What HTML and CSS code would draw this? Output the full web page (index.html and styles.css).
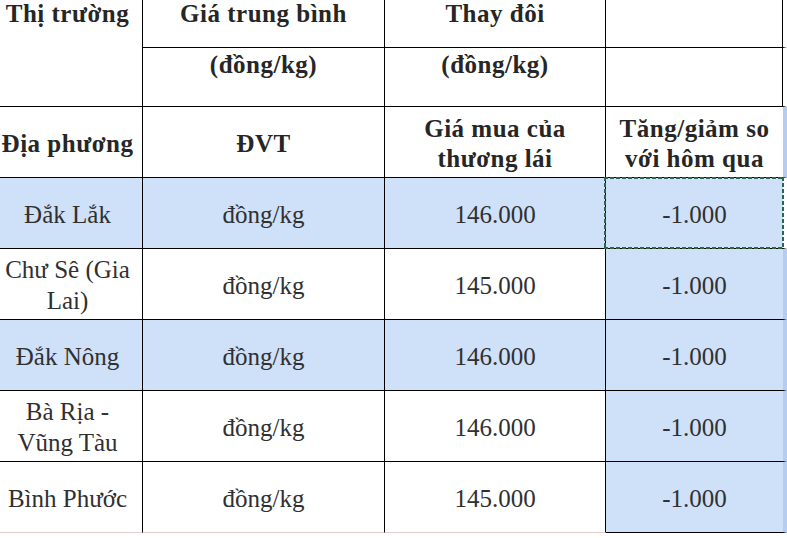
FILE: index.html
```html
<!DOCTYPE html>
<html lang="vi">
<head>
<meta charset="utf-8">
<title>Giá cà phê</title>
<link rel="stylesheet" href="styles.css">
</head>
<body>
<table class="price-table">
  <colgroup>
    <col class="c1">
    <col class="c2">
    <col class="c3">
    <col class="c4">
  </colgroup>
  <tbody>
    <tr class="r-top">
      <th class="col-first top" rowspan="2">Thị trường</th>
      <th class="top">Giá trung bình</th>
      <th class="top">Thay đôi</th>
      <th class="top last-head"></th>
    </tr>
    <tr class="r-unit">
      <th class="top unit">(đồng/kg)</th>
      <th class="top unit">(đồng/kg)</th>
      <th class="top last-head"></th>
    </tr>
    <tr class="r-head">
      <th class="col-first">Địa phương</th>
      <th>ĐVT</th>
      <th>Giá mua của thương lái</th>
      <th class="last strip">Tăng/giảm so với hôm qua</th>
    </tr>
    <tr class="row shaded">
      <td class="col-first">Đắk Lắk</td>
      <td>đồng/kg</td>
      <td>146.000</td>
      <td class="last selected">-1.000</td>
    </tr>
    <tr class="row">
      <td class="col-first">Chư Sê (Gia Lai)</td>
      <td>đồng/kg</td>
      <td>145.000</td>
      <td class="last strip fill">-1.000</td>
    </tr>
    <tr class="row shaded">
      <td class="col-first">Đắk Nông</td>
      <td>đồng/kg</td>
      <td>146.000</td>
      <td class="last strip fill">-1.000</td>
    </tr>
    <tr class="row">
      <td class="col-first">Bà Rịa - Vũng Tàu</td>
      <td>đồng/kg</td>
      <td>146.000</td>
      <td class="last strip fill">-1.000</td>
    </tr>
    <tr class="row final">
      <td class="col-first">Bình Phước</td>
      <td>đồng/kg</td>
      <td>145.000</td>
      <td class="last strip fill">-1.000</td>
    </tr>
  </tbody>
</table>
</body>
</html>
```

FILE: styles.css
```css
html, body {
  margin: 0;
  padding: 0;
  background: #ffffff;
}

.price-table {
  border-collapse: separate;
  border-spacing: 0;
  table-layout: fixed;
  width: 787px;
  font-family: "Liberation Serif", "DejaVu Serif", serif;
  color: #2b2b2b;
}

.c1 { width: 143px; }
.c2 { width: 242px; }
.c3 { width: 221px; }
.c4 { width: 181px; }

th, td {
  box-sizing: border-box;
  padding: 0;
  text-align: center;
  border-right: 1px solid #000;
  border-bottom: 1px solid #000;
}

th {
  font-weight: bold;
  font-size: 25px;
  letter-spacing: 0.5px;
  line-height: 30px;
  vertical-align: middle;
  padding-top: 3px;
  color: #262626;
}

td {
  font-family: "Liberation Serif", "DejaVu Serif", serif;
  font-weight: normal;
  font-size: 25px;
  line-height: 31px;
  vertical-align: middle;
  padding-top: 2px;
  color: #303030;
}

.col-first {
  padding-right: 7px;
}

.r-top { height: 48px; }
.r-unit { height: 59px; }
.r-head { height: 71px; }
.row { height: 71px; }

.top {
  vertical-align: top;
  line-height: 28px;
  padding-top: 0;
}

.unit {
  padding-top: 3px;
}

.last-head {
  border-right: 4px solid #ffffff;
  box-shadow: inset -1px 0 0 #000;
}

.last {
  border-right: 4px solid #b6cdef;
}

.strip {
  border-right-color: #b6cdef;
}

.shaded td {
  background: #cfe0f9;
}

.fill {
  background: #cfe0f9;
}

.final td {
  border-bottom-color: #e2cfcf;
}

.final td.last {
  border-bottom-color: #000;
}

.selected {
  position: relative;
  border-right-color: #ffffff;
}

.selected::after {
  content: "";
  position: absolute;
  top: -1px;
  left: -2px;
  right: -1px;
  bottom: -1px;
  background:
    repeating-linear-gradient(90deg, #2e6449 0 4px, transparent 4px 6px) top left / 100% 2px no-repeat,
    repeating-linear-gradient(90deg, #2e6449 0 4px, transparent 4px 6px) bottom left / 100% 2px no-repeat,
    repeating-linear-gradient(180deg, #2e6449 0 4px, transparent 4px 6px) top left / 2px 100% no-repeat,
    repeating-linear-gradient(180deg, #2e6449 0 4px, transparent 4px 6px) top right / 2px 100% no-repeat;
}
```
